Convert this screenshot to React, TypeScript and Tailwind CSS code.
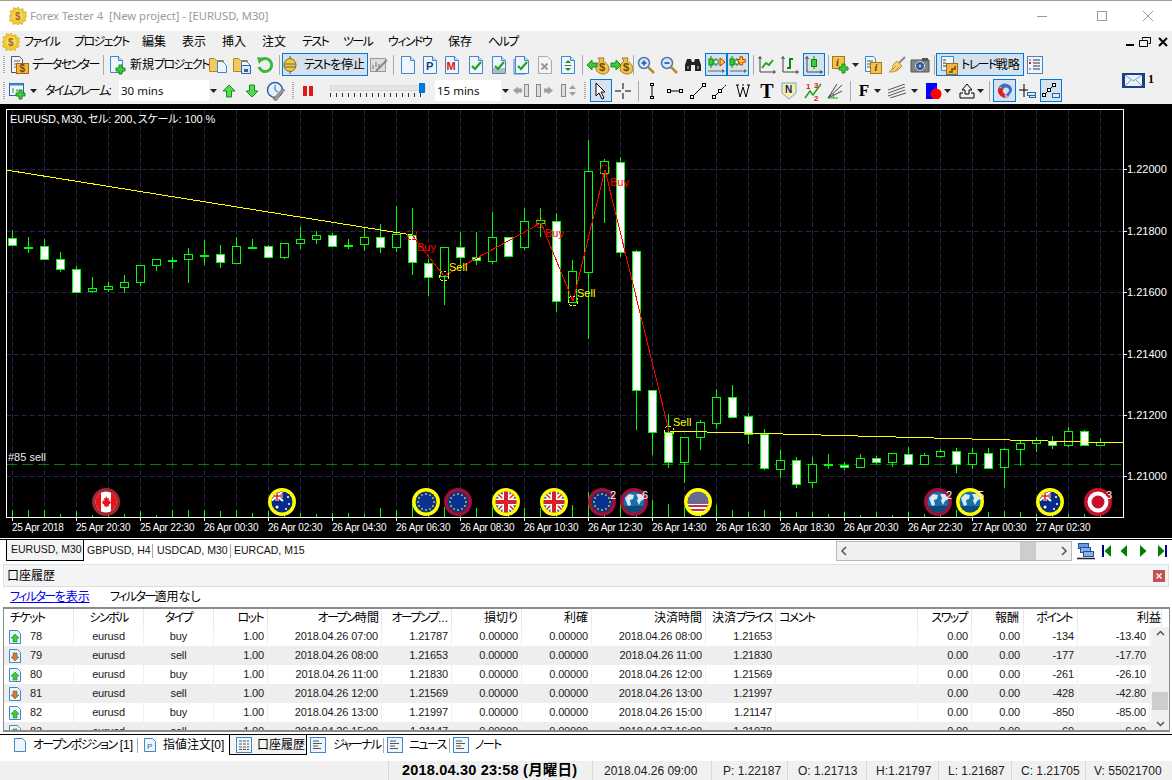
import React from "react";

const G = "#00ff00";
type C = [number, number, number, number, number];
// high, top, bottom, low, white
const candles: C[] = [
[230,238,245,246,1],[237,247,248,253,0],[239,246,259,259,1],[252,259,269,272,1],[266,269,292,292,1],[277,288,291,293,0],[282,286,289,292,0],[275,282,287,293,0],[265,265,282,286,0],[259,259,265,271,0],
[257,260,261,269,0],[248,254,259,283,0],[240,255,256,265,0],[245,254,262,268,1],[237,246,263,263,0],[239,247,248,249,0],[245,246,257,257,1],[243,243,257,259,0],[227,239,243,249,0],[231,235,239,244,0],
[233,235,246,247,1],[239,245,246,249,0],[228,237,244,251,0],[224,237,247,253,1],[206,234,247,252,0],[208,235,262,275,1],[259,263,277,296,1],[247,247,276,305,0],[232,247,257,269,1],[232,257,260,265,1],
[212,237,261,264,0],[237,237,256,256,1],[208,221,247,250,0],[208,220,223,237,0],[213,221,301,312,1],[260,271,302,302,0],[140,171,272,339,0],[159,161,173,223,0],[157,162,252,257,1],[250,251,390,430,1],
[390,390,432,455,1],[414,432,462,468,1],[437,437,462,483,0],[420,422,437,450,0],[389,397,423,429,0],[385,397,417,417,1],[413,416,434,444,1],[429,434,468,470,1],[450,460,469,478,0],[457,460,484,488,1],
[457,464,482,488,0],[454,464,465,469,0],[462,465,467,470,1],[454,458,467,467,0],[456,458,462,464,1],[453,453,462,467,0],[447,454,464,464,1],[453,455,464,464,0],[449,451,456,458,0],[448,451,464,473,1],
[448,453,464,469,0],[448,453,468,468,1],[448,449,467,488,0],[441,443,449,466,0],[437,440,443,452,0],[436,441,445,449,1],[427,431,445,447,0],[430,431,445,445,1],[438,442,445,445,0],
];
const vols = [7,7,7,3,6,2,7,3,6,2,7,7,7,6,7,4,6,5,4,3,4,4,3,9,7,13,6,10,7,9,10,7,9,9,8,12,25,3,13,1,17,13,10,7,12,7,5,7,6,5,5,3,5,2,5,2,5,3,3,7,4,5,6,5,3,5,3,3,2];
const xLabels = ["25 Apr 2018","25 Apr 20:30","25 Apr 22:30","26 Apr 00:30","26 Apr 02:30","26 Apr 04:30","26 Apr 06:30","26 Apr 08:30","26 Apr 10:30","26 Apr 12:30","26 Apr 14:30","26 Apr 16:30","26 Apr 18:30","26 Apr 20:30","26 Apr 22:30","27 Apr 00:30","27 Apr 02:30"];
const prices: [number, string][] = [[169,"1.22000"],[231,"1.21800"],[292,"1.21600"],[354,"1.21400"],[415,"1.21200"],[476,"1.21000"]];

function Flag({ x, ring, kind, n }: { x: number; ring: string; kind: string; n?: string }) {
  return (
    <g transform={`translate(${x} 502)`}>
      <circle r={12} fill="#000" stroke={ring} strokeWidth={4} />
      <g clipPath="url(#flagclip)">
        {kind === "ca" && (<>
          <rect x={-11} y={-11} width={22} height={22} fill="#fff" />
          <rect x={-11} y={-11} width={6} height={22} fill="#e8101a" />
          <rect x={5} y={-11} width={6} height={22} fill="#e8101a" />
          <path d="M0-6l1.5 2.5 1.5-.5-.5 3 2-1-.5 2 1.5.5-3 2.5.3 1.5h-2.2v2h-.2v-2h-2.2l.3-1.5-3-2.5 1.5-.5-.5-2 2 1-.5-3 1.500.5z" fill="#e8101a" />
        </>)}
        {kind === "au" && (<>
          <rect x={-11} y={-11} width={22} height={22} fill="#0a2a8a" />
          <rect x={-11} y={-11} width={12} height={10} fill="#2a3f8f" />
          <path d="M-11-11L1-1M1-11L-11-1" stroke="#fff" strokeWidth={2} />
          <path d="M-5-11v10M-11-6H1" stroke="#fff" strokeWidth={3} />
          <path d="M-5-11v10M-11-6H1" stroke="#e8202a" strokeWidth={1.5} />
          <circle cx={-5} cy={5} r={1.5} fill="#fff" /><circle cx={6} cy={-5} r={1} fill="#fff" /><circle cx={7} cy={2} r={1} fill="#fff" /><circle cx={4} cy={7} r={1} fill="#fff" />
        </>)}
        {kind === "eu" && (<>
          <rect x={-11} y={-11} width={22} height={22} fill="#0a3290" />
          {[0,1,2,3,4,5,6,7,8,9,10,11].map((i) => (
            <circle key={i} cx={8 * Math.cos((i * Math.PI) / 6)} cy={8 * Math.sin((i * Math.PI) / 6)} r={0.9} fill="#f0c020" />
          ))}
        </>)}
        {kind === "uk" && (<>
          <rect x={-11} y={-11} width={22} height={22} fill="#1a2f80" />
          <path d="M-11-11L11 11M11-11L-11 11" stroke="#fff" strokeWidth={5} />
          <path d="M-11-11L11 11M11-11L-11 11" stroke="#d8202a" strokeWidth={1.5} />
          <path d="M0-11V11M-11 0H11" stroke="#fff" strokeWidth={7} />
          <path d="M0-11V11M-11 0H11" stroke="#d8202a" strokeWidth={4} />
        </>)}
        {kind === "us" && (<>
          <rect x={-11} y={-11} width={22} height={22} fill="#fff" />
          {[-9,-5,-1,3,7].map((y) => <rect key={y} x={-11} y={y} width={22} height={2} fill="#d0303a" />)}
          <rect x={-11} y={-11} width={22} height={13} fill="#6a6a90" />
        </>)}
        {kind === "globe" && (<>
          <rect x={-11} y={-11} width={22} height={22} fill="#1670ac" />
          <rect x={-11} y={4} width={22} height={7} fill="#0b4a7e" />
          <path d="M-9-4l4-4 5 1-1 4-3 1 1 5-3 1-2-5zM2-8l6 0 2 5-3 2-2 4-2-4 1-3z" fill="#dce8f0" />
        </>)}
        {kind === "jp" && (<>
          <rect x={-11} y={-11} width={22} height={22} fill="#fff" />
          <circle r={6.5} fill="#c8102e" />
        </>)}
      </g>
      {n && <text x={8} y={-3} fill="#fff" fontSize={11}>{n}</text>}
    </g>
  );
}

function Chart() {
  const vx = Array.from({ length: 35 }, (_, i) => 12.5 + 32 * i);
  const trades: [number, number, string][] = [[412,235,"#ff0000"],[444,276,"#ffff00"],[541,223,"#ff0000"],[573,301,"#ffff00"],[605,170,"#ff0000"],[669,431,"#ffff00"]];
  const labels: [number, number, string, string][] = [[417,251,"Buy","#ff0000"],[449,271,"Sell","#ffff00"],[545,237,"Buy","#ff0000"],[577,297,"Sell","#ffff00"],[610,186,"Buy","#ff0000"],[673,426,"Sell","#ffff00"]];
  return (
    <svg width={1172} height={436} viewBox="0 104 1172 436" className="block shrink-0 bg-black" fontFamily="'Liberation Sans','Noto Sans CJK JP',sans-serif">
      <defs><clipPath id="flagclip"><circle r={10.5} /></clipPath></defs>
      <g shapeRendering="crispEdges">
        {vx.map((x) => <line key={x} x1={x} x2={x} y1={110} y2={517} stroke={x === 188.5 ? "#3a3a90" : "#25254f"} strokeDasharray="5 3" />)}
        {prices.map(([y]) => <line key={y} x1={6} x2={1123} y1={y + 0.5} y2={y + 0.5} stroke="#25254f" strokeDasharray="5 3" />)}
        <line x1={6} x2={1123} y1={464.5} y2={464.5} stroke="#008000" strokeDasharray="11 5" />
        {vols.map((h, i) => <line key={i} x1={12.5 + 16 * i} x2={12.5 + 16 * i} y1={517} y2={517 - h} stroke={G} />)}
        {candles.map(([h, t, b, l, w], i) => {
          const x = 12.5 + 16 * i;
          return (
            <g key={i}>
              <line x1={x} x2={x} y1={h} y2={t} stroke={G} />
              <line x1={x} x2={x} y1={b} y2={l} stroke={G} />
              <rect x={x - 4} y={t + 0.5} width={8} height={b - t} fill={w ? "#fff" : "#000"} stroke={G} />
            </g>
          );
        })}
        <line x1={6} y1={170} x2={412} y2={235} stroke="#ffff00" />
        <line x1={669} y1={431} x2={1123} y2={443} stroke="#ffff00" />
        <polyline points={trades.map((t) => `${t[0]},${t[1]}`).join(" ")} fill="none" stroke="#ff0000" />
        {trades.map(([x, y, c]) => <circle key={x} cx={x} cy={y} r={5} fill="none" stroke={c} strokeDasharray="3 1.500" />)}
        <line x1={6.5} x2={6.5} y1={109} y2={517} stroke="#fff" />
        <line x1={1123.5} x2={1123.5} y1={109} y2={517} stroke="#fff" />
        <line x1={6} x2={1124} y1={109.5} y2={109.5} stroke="#fff" />
        <line x1={6} x2={1124} y1={517.5} y2={517.5} stroke="#fff" />
        {xLabels.map((_, i) => <line key={i} x1={12.5 + 64 * i} x2={12.5 + 64 * i} y1={518} y2={521} stroke="#fff" />)}
        {prices.map(([y]) => <line key={y} x1={1124} x2={1127} y1={y + 0.5} y2={y + 0.5} stroke="#fff" />)}
        <line x1={0} x2={1172} y1={538.5} y2={538.5} stroke="#fff" />
      </g>
      <text x={10} y={123} fill="#fff" fontSize={11} letterSpacing={-0.1}>EURUSD、M30、セル: 200、スケール: 100 %</text>
      <text x={8} y={461} fill="#e8e8e8" fontSize={11}>#85 sell</text>
      {labels.map(([x, y, t, c]) => <text key={x} x={x} y={y} fill={c} fontSize={11}>{t}</text>)}
      {xLabels.map((t, i) => <text key={i} x={12 + 64 * i} y={531} fill="#fff" fontSize={10} letterSpacing={-0.2}>{t}</text>)}
      {prices.map(([y, t]) => <text key={y} x={1127} y={y + 4} fill="#fff" fontSize={11}>{t}</text>)}
      <Flag x={106} ring="#a02a30" kind="ca" />
      <Flag x={282} ring="#ffff00" kind="au" />
      <Flag x={426} ring="#ffff00" kind="eu" />
      <Flag x={458} ring="#a01038" kind="eu" />
      <Flag x={506} ring="#ffff00" kind="uk" />
      <Flag x={554} ring="#ffff00" kind="uk" />
      <Flag x={602} ring="#a01038" kind="eu" n="2" />
      <Flag x={634} ring="#a01038" kind="globe" n="6" />
      <Flag x={698} ring="#ffff00" kind="us" />
      <Flag x={938} ring="#a01038" kind="globe" n="2" />
      <Flag x={970} ring="#ffff00" kind="globe" n="5" />
      <Flag x={1050} ring="#ffff00" kind="au" />
      <Flag x={1098} ring="#c8102e" kind="jp" n="3" />
    </svg>
  );
}

/* kana run: the original UI font sets katakana narrower than Noto */
function Ka({ children }: { children: React.ReactNode }) {
  return <span className="tracking-[-1.6px]">{children}</span>;
}

/* ---------- small toolbar drawings ---------- */
const BLUE = "#3f87cc";
function Svg({ w = 20, h = 20, children }: { w?: number; h?: number; children?: React.ReactNode }) {
  return <svg width={w} height={h} viewBox={`0 0 ${w} ${h}`} className="block shrink-0">{children}</svg>;
}
function Page({ children, fill = "#eef5fc" }: { children?: React.ReactNode; fill?: string }) {
  return (
    <Svg w={18} h={20}>
      <path d="M2.500 1.500h9l4 4v13h-13z" fill={fill} stroke={BLUE} />
      <path d="M11.500 1.500v4h4" fill="#cfe2f5" stroke={BLUE} />
      {children}
    </Svg>
  );
}
const Check = () => <path d="M5 11l3 3 6-7" fill="none" stroke="#1aa51a" strokeWidth={2.2} />;
function Plus({ x, y }: { x: number; y: number }) {
  return <path d={`M${x + 3} ${y}h3v3h3v3h-3v3h-3v-3h-3v-3h3z`} fill="#3ecb3e" stroke="#1c8a1c" />;
}
function Coin({ left }: { left: boolean }) {
  return (
    <Svg w={24} h={20}>
      <path d="M12 3h6l-1 3c4 2 6 5 6 8 0 3-3 5-6 5s-7-2-7-5c0-3 1-6 4-8z" fill="#f2c24c" stroke="#a87a16" />
      <text x={13} y={16} fontSize={11} fontWeight={700} fill="#6b4a08" fontFamily="Liberation Sans">$</text>
      {left ? <path d="M1 10l5-5v3h5v4H6v3z" fill="#3ecb3e" stroke="#1c8a1c" /> : <path d="M11 10L6 5v3H1v4h5v3z" fill="#3ecb3e" stroke="#1c8a1c" />}
    </Svg>
  );
}
function Folder({ save }: { save?: boolean }) {
  return (
    <Svg w={20} h={18}>
      <path d="M1.500 15.500v-13h5l2 2h7v11z" fill="#f6c95e" stroke="#b98516" />
      <path d="M9.500 5.500h5l4 4v7h-9z" fill="#eef5fc" stroke={BLUE} />
      {save && <path d="M9.500 9.500h9v8h-9z" fill="#dfe9f5" stroke="#2d63a8" />}
      {save && <rect x={12} y={13} width={4} height={3} fill="#2d63a8" />}
    </Svg>
  );
}
function Mag({ plus }: { plus?: boolean }) {
  return (
    <Svg w={18} h={18}>
      <circle cx={7} cy={7} r={5.500} fill="#d6e8fa" stroke="#4a78b0" strokeWidth={1.500} />
      <path d="M4.500 7h5" stroke="#2a62b0" strokeWidth={1.800} />
      {plus && <path d="M7 4.500v5" stroke="#2a62b0" strokeWidth={1.800} />}
      <path d="M11 11l6 6" stroke="#b88a2a" strokeWidth={2.500} />
    </Svg>
  );
}
function ChartAxes({ children }: { children?: React.ReactNode }) {
  return (
    <Svg w={20} h={20}>
      <path d="M3 2v15h15" fill="none" stroke="#444" />
      <path d="M1.500 4L3 1.500 4.500 4M16 15.500L18.500 17 16 18.500" fill="none" stroke="#444" />
      {children}
    </Svg>
  );
}
const Caret = () => <Svg w={7} h={4}><path d="M0 0h7L3.500 4z" fill="#222" /></Svg>;
function Grip() {
  return <div className="h-[17px] w-[2px] shrink-0 bg-[repeating-linear-gradient(to_bottom,#a8a8a8_0,#a8a8a8_1px,transparent_1px,transparent_2px)]" />;
}
function Sep() {
  return <div className="h-[20px] w-px bg-[#a9a9a9]" />;
}
function Slot({ className = "", children }: { className?: string; children?: React.ReactNode }) {
  return <div className={`flex h-full shrink-0 items-center justify-center ${className}`}>{children}</div>;
}
function Active({ className = "", children }: { className?: string; children?: React.ReactNode }) {
  return <div className={`flex h-[23px] shrink-0 items-center justify-center border border-[#0078d7] bg-[#d5e1ec] ${className}`}>{children}</div>;
}
function Gear() {
  return (
    <Svg w={18} h={18}>
      <path d="M9 0l2 2.500 3-1 .5 3 3 .5-1 3L18 9l-2 2 1 3-3 .5-.5 3-3-1L9 18l-2-1.500-3 1-.5-3-3-.5 1-3L0 9l2-2-1-3 3-.5.5-3 3 1z" fill="#f0c830" stroke="#c89a18" strokeWidth={0.5} />
      <circle cx={9} cy={9} r={5} fill="#f6da70" />
      <text x={6} y={13} fontSize={10} fontWeight={700} fill="#a06a10" fontFamily="Liberation Sans">$</text>
    </Svg>
  );
}
function Triangle({ dir, color, bar }: { dir: "l" | "r"; color: string; bar?: string }) {
  return (
    <Svg w={12} h={14}>
      {bar && <rect x={dir === "l" ? 1 : 9} y={1} width={2} height={12} fill={bar} />}
      <path d={dir === "l" ? "M10 1v12L3.500 7z" : "M2 1v12L8.500 7z"} fill={color} />
    </Svg>
  );
}

function Row1() {
  return (
    <div className="flex h-[26px] items-center pt-[1px] text-[12px] text-black">
      <Slot className="w-[8px]"><Grip /></Slot>
      <Slot className="w-[22px]">
        <Svg w={20} h={20}>
          <path d="M2.500 1.500h8l3 3v13h-11z" fill="#eef5fc" stroke="#555" />
          <path d="M5 6h6M5 9h6M5 12h4" stroke="#666" />
          <rect x={7.500} y={8.500} width={12} height={10} fill="#f2b63c" stroke="#a06a10" />
          <text x={10.500} y={17} fontSize={10} fontWeight={700} fill="#7a4a08" fontFamily="Liberation Sans">$</text>
        </Svg>
      </Slot>
      <Slot className="w-[70px] justify-start pl-[2px] whitespace-nowrap"><Ka>データセンター</Ka></Slot>
      <Slot className="w-[6px]"><Sep /></Slot>
      <Slot className="w-[24px]">
        <Svg w={20} h={20}>
          <path d="M2.500 1.500h8l4 4v12h-12z" fill="#eef5fc" stroke={BLUE} />
          <path d="M10.500 1.500v4h4" fill="#cfe2f5" stroke={BLUE} />
          <Plus x={8} y={10} />
        </Svg>
      </Slot>
      <Slot className="w-[76px] justify-start whitespace-nowrap">新規<Ka>プロジェクト</Ka></Slot>
      <Slot className="w-[24px]"><Folder /></Slot>
      <Slot className="w-[24px]"><Folder save /></Slot>
      <Slot className="w-[22px]">
        <Svg w={18} h={18}>
          <path d="M4.500 4.500A6.500 6.500 0 1 1 3 11" fill="none" stroke="#3cb83c" strokeWidth={3} />
          <path d="M1 1l7 1-5 6z" fill="#3cb83c" />
        </Svg>
      </Slot>
      <Slot className="w-[6px]"><Sep /></Slot>
      <Active className="w-[86px] gap-[7px] pr-[2px]">
        <Svg w={14} h={18}>
          <path d="M7 0v18" stroke="#555" />
          <ellipse cx={7} cy={9} rx={6} ry={6.500} fill="#f0c840" stroke="#8a6a14" />
          <path d="M1 8h12M1 11h12" stroke="#666" />
        </Svg>
        <span className="whitespace-nowrap"><Ka>テスト</Ka>を停止</span>
      </Active>
      <Slot className="w-[22px]">
        <Svg w={18} h={16}>
          <rect x={0.500} y={1.500} width={15} height={13} fill="#ddd" stroke="#999" />
          <path d="M3 8v4M6 5v5M9 7v4" stroke="#777" />
          <path d="M6 14L17 3" stroke="#888" strokeWidth={2} />
        </Svg>
      </Slot>
      <Slot className="w-[6px]"><Sep /></Slot>
      <Slot className="w-[24px]"><Page /></Slot>
      <Slot className="w-[19px]"><Page><text x={5} y={15} fontSize={11} fontWeight={700} fill="#173f80" fontFamily="Liberation Sans">P</text></Page></Slot>
      <Slot className="w-[26px]"><Page><text x={3.500} y={15} fontSize={11} fontWeight={700} fill="#d81818" fontFamily="Liberation Sans">M</text></Page></Slot>
      <Slot className="w-[22px]"><Page><Check /></Page></Slot>
      <Slot className="w-[23px]"><Page><rect x={3} y={13} width={12} height={5} fill="#bbb" /><Check /></Page></Slot>
      <Slot className="w-[24px]"><Page><path d="M1 4v15h11" fill="none" stroke={BLUE} /><Check /></Page></Slot>
      <Slot className="w-[22px]">
        <Svg w={18} h={20}>
          <path d="M2.500 1.500h9l4 4v13h-13z" fill="#f4f4f4" stroke="#aaa" />
          <path d="M5.500 8.500l6 6M11.500 8.500l-6 6" stroke="#999" strokeWidth={2} />
        </Svg>
      </Slot>
      <Slot className="w-[24px]"><Page><path d="M9 5l3 3H6zM9 16l3-3H6z" fill="#169a16" /><path d="M5.500 10.500h7" stroke="#666" /></Page></Slot>
      <Slot className="w-[5px]"><Sep /></Slot>
      <Slot className="w-[26px]"><Coin left /></Slot>
      <Slot className="w-[21px]"><Coin left={false} /></Slot>
      <Slot className="w-[3px]"><Sep /></Slot>
      <Slot className="w-[21px]"><Mag plus /></Slot>
      <Slot className="w-[25px]"><Mag /></Slot>
      <Slot className="w-[24px]">
        <Svg w={18} h={16}>
          <path d="M1 8l2-6h4l1 3h2l1-3h4l2 6v6h-6V8H7v6H1z" fill="#222" />
          <rect x={3} y={9} width={2} height={3} fill="#777" /><rect x={13} y={9} width={2} height={3} fill="#777" />
        </Svg>
      </Slot>
      <Active className="w-[22px]">
        <Svg w={19} h={19}>
          <path d="M4 1v12M9 3v8" stroke="#0a8a0a" />
          <rect x={2} y={4} width={4} height={6} fill="#3ccf3c" stroke="#0a8a0a" /><rect x={7} y={5} width={4} height={4} fill="#fff" stroke="#0a8a0a" />
          <path d="M13 3l5 4-5 4z" fill="#f8d820" stroke="#d81818" />
          <path d="M1 16h16" stroke="#666" /><path d="M15 14l3 2-3 2z" fill="#666" />
        </Svg>
      </Active>
      <Active className="w-[22px]">
        <Svg w={19} h={19}>
          <path d="M3 1v12M8 3v8" stroke="#0a8a0a" />
          <rect x={1} y={4} width={4} height={6} fill="#3ccf3c" stroke="#0a8a0a" /><rect x={6} y={5} width={4} height={4} fill="#fff" stroke="#0a8a0a" />
          <path d="M14 2v3h3v3h-3v3h-3V8H9V5h2V2z" fill="#f8d820" stroke="#d81818" transform="translate(1 0) scale(.9)" />
          <path d="M1 16h16" stroke="#666" /><path d="M15 14l3 2-3 2z" fill="#666" />
        </Svg>
      </Active>
      <Slot className="w-[8px]"><Sep /></Slot>
      <Slot className="w-[20px]"><ChartAxes><path d="M5 13l4-5 3 2 4-5" fill="none" stroke="#1aa51a" strokeWidth={1.800} /></ChartAxes></Slot>
      <Slot className="w-[26px]"><ChartAxes><path d="M10 3v11M10 4h3M7 13h3" fill="none" stroke="#0a8a0a" strokeWidth={2} /></ChartAxes></Slot>
      <Active className="w-[22px]"><ChartAxes><path d="M10 1v13" stroke="#0a8a0a" /><rect x={7.500} y={4.500} width={5} height={7} fill="#3ccf3c" stroke="#0a8a0a" /></ChartAxes></Active>
      <Slot className="w-[6px]"><Sep /></Slot>
      <Slot className="w-[19px]">
        <Svg w={18} h={20}>
          <rect x={0.500} y={1.500} width={12} height={12} fill="#f2c24c" stroke="#a87a16" />
          <text x={4} y={11} fontSize={10} fontWeight={700} fontStyle="italic" fill="#5a3a08" fontFamily="Liberation Serif">i</text>
          <Plus x={7} y={9} />
        </Svg>
      </Slot>
      <Slot className="w-[10px]"><Caret /></Slot>
      <Slot className="w-[26px]">
        <Svg w={18} h={20}>
          <path d="M1.500 1.500h8l2 2v13h-10z" fill="#eef5fc" stroke={BLUE} /><path d="M3 6h6M3 9h4M3 12h4" stroke="#555" />
          <rect x={6.500} y={7.500} width={11} height={11} fill="#f2c24c" stroke="#a87a16" />
          <text x={10.500} y={16} fontSize={10} fontWeight={700} fontStyle="italic" fill="#5a3a08" fontFamily="Liberation Serif">i</text>
        </Svg>
      </Slot>
      <Slot className="w-[22px]">
        <Svg w={18} h={18}>
          <path d="M17 1l-6 6" stroke="#8a8a8a" strokeWidth={2} />
          <path d="M9 5l5 5-3 3c-3 3-6 3-10 3 3-2 4-5 4-7z" fill="#f2d06c" stroke="#c09830" />
          <path d="M4 14l4-4M7 15l4-4" stroke="#c09830" />
        </Svg>
      </Slot>
      <Slot className="w-[24px]">
        <Svg w={20} h={16}>
          <path d="M1 3h18v12H1z" fill="#808488" stroke="#555" /><rect x={12} y={1} width={6} height={3} fill="#555" />
          <circle cx={10} cy={9} r={4.500} fill="#2a5a90" stroke="#ddd" /><circle cx={10} cy={9} r={1.500} fill="#9cc4ea" />
        </Svg>
      </Slot>
      <Slot className="w-[4px]"><Sep /></Slot>
      <Active className="w-[88px] justify-start gap-[3px] pl-[3px]">
        <Svg w={18} h={20}>
          <path d="M1.500 1.500h12v14h-12z" fill="#eef5fc" stroke={BLUE} /><path d="M3 5h3M3 8h3M3 11h3" stroke="#333" />
          <rect x={6.500} y={8.500} width={11} height={11} fill="#f2b63c" stroke="#a06a10" /><path d="M9 17h3v-3h3v-3" fill="none" stroke="#6b4a08" strokeWidth={1.500} />
        </Svg>
        <span className="whitespace-nowrap"><Ka>トレード</Ka>戦略</span>
      </Active>
      <Slot className="w-[22px]">
        <Svg w={16} h={18}>
          <rect x={0.500} y={0.500} width={15} height={17} fill="#eef5fc" stroke={BLUE} />
          <path d="M6 4h7M6 7h7M6 10h7M6 13h7" stroke="#333" /><path d="M3 3v2M2 6l2 2M4 6l-2 2M3 12v2" stroke="#d01818" />
        </Svg>
      </Slot>
    </div>
  );
}

function Select({ className, value }: { className: string; value: string }) {
  return (
    <div className={`flex h-[21px] shrink-0 items-center justify-between bg-white pl-[2px] ${className}`}>
      <span className="font-['Noto_Sans',sans-serif] text-[11.5px] text-[#111]">{value}</span>
      <span className="flex h-full w-[9px] items-center justify-center bg-[#f0f0f0]"><Caret /></span>
    </div>
  );
}
function CandleArrow({ kind }: { kind: "l" | "r" | "v" }) {
  return (
    <Svg w={20} h={16}>
      <rect x={kind === "l" ? 12.500 : kind === "r" ? 1.500 : 3.500} y={1.500} width={4} height={12} fill="#ddd" stroke="#888" />
      {kind === "l" && <path d="M1 7.500l5-4v2h4v4H6v2z" fill="#a0a0a0" />}
      {kind === "r" && <path d="M18 7.500l-5-4v2H9v4h4v2z" fill="#a0a0a0" />}
      {kind === "v" && <path d="M11 6l3.500-4L18 6zM11 9l3.500 4L18 9z" fill="#a0a0a0" />}
    </Svg>
  );
}
function Row2() {
  return (
    <div className="flex h-[27px] items-center text-[12px] text-black">
      <Slot className="w-[8px]"><Grip /></Slot>
      <Slot className="w-[20px]">
        <Svg w={18} h={18}>
          <rect x={0.500} y={1.500} width={14} height={12} fill="#eef5fc" stroke="#2d63a8" /><rect x={0.500} y={1.500} width={14} height={2} fill="#3f87cc" />
          <path d="M4 6v5M8 7v3" stroke="#1aa51a" /><Plus x={7} y={8} />
        </Svg>
      </Slot>
      <Slot className="w-[10px]"><Caret /></Slot>
      <Slot className="w-[75px] justify-start pl-[7px] whitespace-nowrap"><Ka>タイムフレーム:</Ka></Slot>
      <Select className="ml-[6px] w-[99px]" value="30 mins" />
      <Slot className="w-[22px]"><Svg w={14} h={14}><path d="M7 1l6 6H9.500v6h-5V7H1z" fill="#52dc52" stroke="#1c8a1c" /></Svg></Slot>
      <Slot className="w-[24px]"><Svg w={14} h={14}><path d="M7 13l6-6H9.500V1h-5v6H1z" fill="#52dc52" stroke="#1c8a1c" /></Svg></Slot>
      <Slot className="w-[24px]">
        <Svg w={20} h={20}>
          <circle cx={9} cy={9} r={7.500} fill="#e6f0fa" stroke="#2d63a8" strokeWidth={1.500} />
          <path d="M9 4v5l3 2" fill="none" stroke="#2d63a8" />
          <path d="M7 18l9-10 3 1-2 2-7 9z" fill="#999" stroke="#555" strokeWidth={0.5} />
        </Svg>
      </Slot>
      <Slot className="w-[10px]"><Grip /></Slot>
      <Slot className="w-[20px] gap-[2px]"><div className="h-[10px] w-[4px] bg-[#e01818]" /><div className="h-[10px] w-[4px] bg-[#e01818]" /></Slot>
      <div className="relative ml-[12px] h-full w-[96px] shrink-0">
        <div className="absolute left-0 right-0 top-[8px] h-[6px] border border-[#dadada] bg-[#e4e4e4]" />
        <div className="absolute left-0 right-0 top-[16px] h-[4px] bg-[repeating-linear-gradient(to_right,#333_0,#333_1px,transparent_1px,transparent_6px)]" />
        <div className="absolute left-[89px] top-[6px] h-[10px] w-[6px] bg-[#0078d7]" />
      </div>
      <Select className="ml-[9px] w-[75px]" value="15 mins" />
      <Slot className="w-[24px]"><CandleArrow kind="l" /></Slot>
      <Slot className="w-[21px]"><CandleArrow kind="r" /></Slot>
      <Slot className="w-[25px]"><CandleArrow kind="v" /></Slot>
      <Slot className="w-[10px]"><Grip /></Slot>
      <Active className="w-[22px]">
        <Svg w={14} h={18}><path d="M2 1v13l3-3 3 6 2-1-3-6h4z" fill="#fff" stroke="#000" /></Svg>
      </Active>
      <Slot className="w-[22px]"><Svg w={16} h={16}><path d="M8 0v6M8 10v6M0 8h6M10 8h6" stroke="#000" /></Svg></Slot>
      <Slot className="w-[8px]"><Sep /></Slot>
      <Slot className="w-[20px]"><Svg w={8} h={18}><path d="M4 2v14" stroke="#000" /><rect x={2.500} y={1.500} width={3} height={2} fill="#fff" stroke="#000" /><rect x={2.500} y={14.500} width={3} height={2} fill="#fff" stroke="#000" /></Svg></Slot>
      <Slot className="w-[26px]"><Svg w={16} h={8}><path d="M2 4h12" stroke="#000" /><rect x={0.500} y={2.500} width={3} height={3} fill="#fff" stroke="#000" /><rect x={12.500} y={2.500} width={3} height={3} fill="#fff" stroke="#000" /></Svg></Slot>
      <Slot className="w-[20px]"><Svg w={16} h={16}><path d="M2 14L14 2" stroke="#000" /><rect x={0.500} y={12.500} width={3} height={3} fill="#fff" stroke="#000" /><rect x={12.500} y={0.500} width={3} height={3} fill="#fff" stroke="#000" /></Svg></Slot>
      <Slot className="w-[24px]"><Svg w={16} h={16}><path d="M2 14L16 0" stroke="#000" strokeDasharray="14 1 2" /><rect x={0.500} y={12.500} width={3} height={3} fill="#fff" stroke="#000" /><rect x={6.500} y={6.500} width={3} height={3} fill="#fff" stroke="#000" /></Svg></Slot>
      <Slot className="w-[22px]"><Svg w={16} h={14}><path d="M1 1h3M12 1h3M7 1h2M2 1l3 12 3-10 3 10 3-12" fill="none" stroke="#000" /></Svg></Slot>
      <Slot className="w-[26px]"><span className="font-['Liberation_Serif',serif] text-[20px] font-bold leading-none">T</span></Slot>
      <Slot className="w-[18px]">
        <Svg w={16} h={18}>
          <path d="M1 1h14v10l-7 6-7-6z" fill="#f8f0a0" stroke="#7aa4d0" />
          <text x={4} y={11} fontSize={10} fontWeight={700} fill="#1a1a80" fontFamily="Liberation Sans">N</text>
        </Svg>
      </Slot>
      <Slot className="w-[30px]">
        <Svg w={18} h={20}>
          <path d="M1 17l5-7 3 4 8-11" fill="none" stroke="#1aa51a" strokeWidth={1.500} />
          <text x={2} y={8} fontSize={8} fontWeight={700} fill="#d81818" fontFamily="Liberation Sans">1</text>
          <text x={10} y={7} fontSize={8} fontWeight={700} fill="#d81818" fontFamily="Liberation Sans">3</text>
          <text x={10} y={20} fontSize={8} fontWeight={700} fill="#d81818" fontFamily="Liberation Sans">2</text>
        </Svg>
      </Slot>
      <Slot className="w-[14px]"><Svg w={16} h={16}><path d="M1 15L15 2M1 15L15 8M1 15L10 1" fill="none" stroke="#444" /><path d="M1 15h10" stroke="#1aa51a" /><path d="M6 15a5 5 0 0 0 0-5" fill="none" stroke="#1aa51a" /></Svg></Slot>
      <Slot className="w-[16px]"><Sep /></Slot>
      <Slot className="w-[12px]"><span className="font-['Liberation_Serif',serif] text-[17px] font-bold leading-none">F</span></Slot>
      <Slot className="w-[14px]"><Caret /></Slot>
      <Slot className="w-[26px]"><Svg w={18} h={14}><path d="M0 6L17 0M0 9L17 3M0 12L17 6M2 14L18 9" stroke="#555" /></Svg></Slot>
      <Slot className="w-[8px]"><Caret /></Slot>
      <Slot className="ml-[8px] w-[16px]">
        <Svg w={16} h={16}><rect x={0} y={0} width={11} height={16} fill="#0000ff" /><circle cx={10} cy={11} r={5.500} fill="#ff0000" /></Svg>
      </Slot>
      <Slot className="w-[10px]"><Caret /></Slot>
      <Slot className="ml-[7px] w-[16px]"><Svg w={16} h={16}><path d="M8 1l5 6h-3v4H6V7H3zM1 10h3M12 10h3M1 10v5h14v-5" fill="none" stroke="#000" /></Svg></Slot>
      <Slot className="w-[10px]"><Caret /></Slot>
      <Slot className="w-[8px]"><Sep /></Slot>
      <Active className="w-[23px]">
        <Svg w={18} h={19}>
          <path d="M3 6a7 7 0 0 1 13 4l-4 6-2-2 3-4a3 3 0 0 0-6-1l-2-3z" fill="#3f6fc0" />
          <path d="M3 6c-3 5 1 10 6 11l2-3c-3-1-5-3-4-6z" fill="#e02020" />
          <path d="M9 14l3 3" stroke="#bbb" strokeWidth={2} />
        </Svg>
      </Active>
      <Slot className="w-[24px]"><Svg w={18} h={16}><path d="M0 7h9M5 1v13" stroke="#000" /><rect x={8.500} y={9.500} width={8} height={3} fill="#dbe8f6" stroke="#2d63a8" /><rect x={10.500} y={12.500} width={6} height={2} fill="#dbe8f6" stroke="#2d63a8" /></Svg></Slot>
      <Active className="w-[22px]">
        <Svg w={18} h={16}><path d="M2 12L12 2" stroke="#000" /><rect x={0.500} y={10.500} width={3} height={3} fill="#fff" stroke="#000" /><rect x={5.500} y={5.500} width={3} height={3} fill="#fff" stroke="#000" /><rect x={10.500} y={0.500} width={3} height={3} fill="#fff" stroke="#000" /><rect x={10.500} y={10.500} width={7} height={4} fill="#dbe8f6" stroke="#2d63a8" /></Svg>
      </Active>
    </div>
  );
}

const COLS = "grid grid-cols-[70px_70px_70px_54px_114px_70px_70px_70px_114px_70px_142px_54px_52px_54px_72px]";
const heads: [React.ReactNode, string][] = [
  [<Ka>チケット</Ka>,"justify-start pl-[6px]"],
  [<Ka>シンボル</Ka>,"justify-center"],
  [<Ka>タイプ</Ka>,"justify-center"],
  [<Ka>ロット</Ka>,"justify-end pr-[4px]"],
  [<><Ka>オープン</Ka>時間</>,"justify-end pr-[2px]"],
  [<><Ka>オープンプ</Ka>...</>,"justify-end pr-[3px]"],
  [<>損切り</>,"justify-end pr-[3px]"],
  [<>利確</>,"justify-end pr-[3px]"],
  [<>決済時間</>,"justify-end pr-[3px]"],
  [<>決済<Ka>プライス</Ka></>,"justify-end pr-[3px]"],
  [<Ka>コメント</Ka>,"justify-start pl-[3px]"],
  [<Ka>スワップ</Ka>,"justify-end pr-[4px]"],
  [<>報酬</>,"justify-end pr-[4px]"],
  [<Ka>ポイント</Ka>,"justify-end pr-[5px]"],
  [<>利益</>,"justify-end mr-[-12px]"],
];
const rows = [
  ["78","buy","2018.04.26 07:00","1.21787","2018.04.26 08:00","1.21653","-134","-13.40"],
  ["79","sell","2018.04.26 08:00","1.21653","2018.04.26 11:00","1.21830","-177","-17.70"],
  ["80","buy","2018.04.26 11:00","1.21830","2018.04.26 12:00","1.21569","-261","-26.10"],
  ["81","sell","2018.04.26 12:00","1.21569","2018.04.26 13:00","1.21997","-428","-42.80"],
  ["82","buy","2018.04.26 13:00","1.21997","2018.04.26 15:00","1.21147","-850","-85.00"],
  ["83","sell","2018.04.26 15:00","1.21147","2018.04.27 16:00","1.21078","69","6.90"],
];

function RowIcon({ buy }: { buy: boolean }) {
  return (
    <Svg w={14} h={16}>
      <path d="M1.500 1.500h8l3 3v10h-11z" fill="#eef5fc" stroke={BLUE} />
      {buy ? <path d="M7 5l4 4H9v4H5V9H3z" fill="#3ecb3e" stroke="#1c8a1c" strokeWidth={0.6} /> : <path d="M7 13l4-4H9V5H5v4H3z" fill="#f06a3c" stroke="#1c8a1c" strokeWidth={0.6} />}
    </Svg>
  );
}
function Cell({ className = "", children }: { className?: string; children?: React.ReactNode }) {
  return <div className={`flex h-[19px] items-center overflow-hidden whitespace-nowrap border-r border-[#f0f0f0] tracking-[-0.15px] ${className}`}>{children}</div>;
}
function Table() {
  return (
    <div className="relative mx-[3px] h-[125px] w-[1167px] overflow-hidden border-x border-t-2 border-b-2 border-[#8c8c8c] bg-white text-[11px] text-[#1a1a1a]">
      <div className={`${COLS} h-[18px] text-[12px] text-black`}>
        {heads.map(([h, c], i) => <div key={i} className={`flex h-[18px] items-center whitespace-nowrap border-r border-[#e8e8e8] ${c}`}><span>{h}</span></div>)}
      </div>
      {rows.map((r, i) => (
        <div key={r[0]} className={`${COLS} ${i % 2 ? "bg-[#eeeeee]" : "bg-white"}`}>
          <Cell className="gap-[8px] pl-[4px]"><RowIcon buy={r[1] === "buy"} />{r[0]}</Cell>
          <Cell className="justify-center">eurusd</Cell>
          <Cell className="justify-center">{r[1]}</Cell>
          <Cell className="justify-end pr-[3px]">1.00</Cell>
          <Cell className="justify-end pr-[3px]">{r[2]}</Cell>
          <Cell className="justify-end pr-[3px]">{r[3]}</Cell>
          <Cell className="justify-end pr-[3px]">0.00000</Cell>
          <Cell className="justify-end pr-[3px]">0.00000</Cell>
          <Cell className="justify-end pr-[3px]">{r[4]}</Cell>
          <Cell className="justify-end pr-[3px]">{r[5]}</Cell>
          <Cell />
          <Cell className="justify-end pr-[3px]">0.00</Cell>
          <Cell className="justify-end pr-[3px]">0.00</Cell>
          <Cell className="justify-end pr-[3px]">{r[6]}</Cell>
          <Cell className="justify-end pr-[3px]">{r[7]}</Cell>
        </div>
      ))}
      <div className="absolute bottom-0 right-0 top-[18px] flex w-[18px] flex-col items-center justify-between bg-[#f0f0f0] py-[3px]">
        <Svg w={9} h={6}><path d="M1 5l3.500-3.500L8 5" fill="none" stroke="#555" strokeWidth={1.500} /></Svg>
        <Svg w={9} h={6}><path d="M1 1l3.500 3.500L8 1" fill="none" stroke="#555" strokeWidth={1.500} /></Svg>
      </div>
      <div className="absolute right-[1px] top-[83px] h-[18px] w-[16px] bg-[#cdcdcd]" />
    </div>
  );
}

function LinesIcon({ color = false }: { color?: boolean }) {
  return (
    <Svg w={16} h={16}>
      <rect x={0.500} y={0.500} width={15} height={15} fill="#eef5fc" stroke={BLUE} />
      {color ? <path d="M3 4h3M7 4h3M11 4h2M3 7h3M7 7h3M11 7h2M3 10h3M7 10h3M11 10h2M3 12.500h3M7 12.500h3M11 12.500h2" stroke="#555" /> : <path d="M3 4h6M3 6.500h9M3 9h5M3 11.500h8" stroke="#555" />}
    </Svg>
  );
}
function BottomTab({ className = "", icon, label }: { className?: string; icon: React.ReactNode; label: React.ReactNode }) {
  return <div className={`flex shrink-0 items-center whitespace-nowrap ${className}`}>{icon}<span>{label}</span></div>;
}
function BottomTabs() {
  return (
    <div className="flex h-[27px] shrink-0 border-t border-black bg-white text-[12px] text-black">
      <div className="flex h-[20px] items-center pl-[13px]">
        <BottomTab className="w-[124px] gap-[6px]" icon={<Svg w={14} h={16}><path d="M1.500 1.500h8l3 3v10h-11z" fill="#eef5fc" stroke={BLUE} /></Svg>} label={<><Ka>オープンポジション</Ka> [1]</>} />
        <div className="h-[15px] w-px bg-[#aaa]" />
        <BottomTab className="ml-[5px] w-[86px] gap-[6px]" icon={<Svg w={14} h={16}><path d="M1.500 1.500h8l3 3v10h-11z" fill="#eef5fc" stroke={BLUE} /><text x={4} y={12} fontSize={8} fill="#2d63a8" fontFamily="Liberation Sans">P</text></Svg>} label="指値注文[0]" />
        <div className="flex h-[20px] w-[78px] shrink-0 items-center gap-[2px] border-x border-b border-black bg-[#f4f4f4] pl-[6px] pr-[2px]">
          <LinesIcon color />
          <span className="ml-[3px] whitespace-nowrap">口座履歴</span>
        </div>
        <BottomTab className="ml-[3px] w-[73px] gap-[7px]" icon={<LinesIcon />} label={<Ka>ジャーナル</Ka>} />
        <div className="h-[15px] w-px bg-[#aaa]" />
        <BottomTab className="ml-[3px] w-[62px] gap-[6px]" icon={<LinesIcon />} label={<Ka>ニュース</Ka>} />
        <div className="h-[15px] w-px bg-[#aaa]" />
        <BottomTab className="ml-[3px] gap-[6px]" icon={<LinesIcon />} label={<Ka>ノート</Ka>} />
      </div>
    </div>
  );
}

function StatusCell({ className = "", children }: { className?: string; children?: React.ReactNode }) {
  return <div className={`flex h-full shrink-0 items-center whitespace-nowrap border-l border-[#d8d8d8] ${className}`}>{children}</div>;
}

export default function App() {
  const menus: [React.ReactNode, string][] = [[<Ka>ファイル</Ka>,"w-[50px]"],[<Ka>プロジェクト</Ka>,"w-[68px]"],["編集","w-[40px]"],["表示","w-[40px]"],["挿入","w-[40px]"],["注文","w-[40px]"],[<Ka>テスト</Ka>,"w-[41px]"],[<Ka>ツール</Ka>,"w-[45px]"],[<Ka>ウィンドウ</Ka>,"w-[60px]"],["保存","w-[40px]"],[<Ka>ヘルプ</Ka>,"w-[40px]"]];
  return (
    <div className="flex h-[780px] w-[1172px] flex-col overflow-hidden bg-[#f0f0f0] font-['Liberation_Sans','Noto_Sans_CJK_JP',sans-serif] [font-feature-settings:'palt']">
      {/* title */}
      <div className="flex h-[31px] shrink-0 items-center border-t border-[#a89a90] bg-white pl-[9px]">
        <Gear />
        <span className="ml-[3px] whitespace-pre font-['Noto_Sans',sans-serif] text-[11.2px] text-[#9a9a9a]">Forex Tester 4  [New project] - [EURUSD, M30]</span>
        <div className="ml-auto flex items-center">
          <Svg w={10} h={10}><path d="M0 5.500h10" stroke="#999" /></Svg>
          <div className="ml-[50px]"><Svg w={10} h={10}><rect x={0.500} y={0.500} width={9} height={9} fill="none" stroke="#999" /></Svg></div>
          <div className="ml-[36px] mr-[19px]"><Svg w={10} h={10}><path d="M0 0l10 10M10 0L0 10" stroke="#999" /></Svg></div>
        </div>
      </div>
      {/* menu */}
      <div className="flex h-[20px] shrink-0 items-center pl-[2px] pt-[1px] text-[12px] text-black">
        <div className="w-[22px] shrink-0"><Gear /></div>
        {menus.map(([m, w], i) => <div key={i} className={`shrink-0 whitespace-nowrap ${w}`}>{m}</div>)}
        <div className="ml-auto flex items-center gap-[5px] pr-[4px]">
          <Svg w={8} h={8}><path d="M0 7h8" stroke="#000" strokeWidth={2} /></Svg>
          <Svg w={12} h={10}><path d="M3.500 2.500v-2h8v6h-2M.5 3.500h8v6h-8z" fill="none" stroke="#000" /></Svg>
          <div className="ml-[2px]"><Svg w={10} h={10}><path d="M1 1l8 8M9 1L1 9" stroke="#000" strokeWidth={2} /></Svg></div>
        </div>
      </div>
      {/* toolbars */}
      <div className="flex h-[53px] shrink-0">
        <div className="flex flex-col">
          <Row1 />
          <Row2 />
        </div>
        <div className="ml-[60px] mt-[22px] flex items-start">
          <Svg w={24} h={15}>
            <rect x={0} y={0} width={23} height={15} fill="#1c3f8c" /><rect x={3} y={2} width={17} height={11} fill="#eaf2fb" />
            <path d="M3 2l8.500 6L20 2M3 13l6-6M20 13l-6-6" fill="none" stroke="#7a98c8" />
          </Svg>
          <span className="ml-[2px] font-['Liberation_Serif',serif] text-[12px] font-bold leading-none">1</span>
        </div>
      </div>
      <Chart />
      {/* chart tabs */}
      <div className="flex h-[21px] shrink-0 items-center bg-white text-[10.5px] text-[#111]">
        <div className="ml-[6px] flex h-full w-[78px] shrink-0 items-center border-x border-b border-black bg-[#f4f4f4] pl-[4px]">EURUSD, M30</div>
        <div className="flex h-full w-[68px] shrink-0 items-center pl-[3px]">GBPUSD, H4</div>
        <div className="h-[14px] w-px bg-[#aaa]" />
        <div className="flex h-full w-[77px] shrink-0 items-center pl-[4px]">USDCAD, M30</div>
        <div className="h-[14px] w-px bg-[#aaa]" />
        <div className="flex h-full w-[605px] shrink-0 items-center pl-[3px]">EURCAD, M15</div>
        <div className="relative flex h-[20px] w-[236px] shrink-0 items-center justify-between border border-[#bbb] bg-[#f0f0f0] px-[3px]">
          <Svg w={8} h={10}><path d="M6 1L2 5l4 4" fill="none" stroke="#555" strokeWidth={1.500} /></Svg>
          <div className="absolute left-[183px] top-0 h-full w-[16px] bg-[#cdcdcd]" />
          <Svg w={8} h={10}><path d="M2 1l4 4-4 4" fill="none" stroke="#555" strokeWidth={1.500} /></Svg>
        </div>
        <div className="ml-[5px] flex items-center">
          <Svg w={19} h={18}>
            <rect x={1.500} y={1.500} width={10} height={5} fill="#6a9ae0" stroke="#2050a0" /><rect x={3.500} y={5.500} width={10} height={5} fill="#8ab0e8" stroke="#2050a0" /><rect x={6.500} y={9.500} width={10} height={5} fill="#8ab0e8" stroke="#2050a0" />
            <path d="M0 16.500h18" stroke="#222" strokeWidth={1.500} />
          </Svg>
          <div className="ml-[5px]"><Triangle dir="l" color="#008000" bar="#00008b" /></div>
          <div className="ml-[4px]"><Triangle dir="l" color="#008000" /></div>
          <div className="ml-[9px]"><Triangle dir="r" color="#008000" /></div>
          <div className="ml-[6px]"><Triangle dir="r" color="#008000" bar="#00008b" /></div>
        </div>
      </div>
      {/* panel */}
      <div className="flex h-[173px] shrink-0 flex-col bg-white">
        <div className="mx-[3px] mt-[3px] flex h-[23px] items-center justify-between border border-[#ddd] border-t-[#cfe6f7] bg-[#f4f4f4] pl-[3px] pr-[3px] text-[12px] text-black">
          <span>口座履歴</span>
          <div className="flex h-[12px] w-[12px] items-center justify-center bg-[#c75050]"><Svg w={6} h={6}><path d="M0.500 0.500l5 5M5.500 0.500l-5 5" stroke="#fff" strokeWidth={1.300} /></Svg></div>
        </div>
        <div className="flex h-[20px] items-center text-[12px]">
          <span className="ml-[10px] w-[100px] shrink-0"><span className="text-[#0000ee] underline"><Ka>フィルター</Ka>を表示</span></span>
          <span className="text-black"><Ka>フィルター</Ka>適用なし</span>
        </div>
        <Table />
      </div>
      <BottomTabs />
      {/* status */}
      <div className="flex h-[19px] shrink-0 text-[12px] text-[#222]">
        <div className="w-[388px] shrink-0" />
        <StatusCell className="w-[204px] pl-[13px] text-[14.5px] font-bold tracking-[0.2px] text-black">2018.04.30 23:58 (月曜日)</StatusCell>
        <StatusCell className="w-[119px] pl-[11px]">2018.04.26 09:00</StatusCell>
        <StatusCell className="w-[76px] pl-[11px]">P: 1.22187</StatusCell>
        <StatusCell className="w-[79px] pl-[10px]">O: 1.21713</StatusCell>
        <StatusCell className="w-[72px] pl-[9px]">H:1.21797</StatusCell>
        <StatusCell className="w-[73px] pl-[9px]">L: 1.21687</StatusCell>
        <StatusCell className="w-[74px] pl-[9px]">C: 1.21705</StatusCell>
        <StatusCell className="pl-[8px]">V: 55021700</StatusCell>
      </div>
    </div>
  );
}
